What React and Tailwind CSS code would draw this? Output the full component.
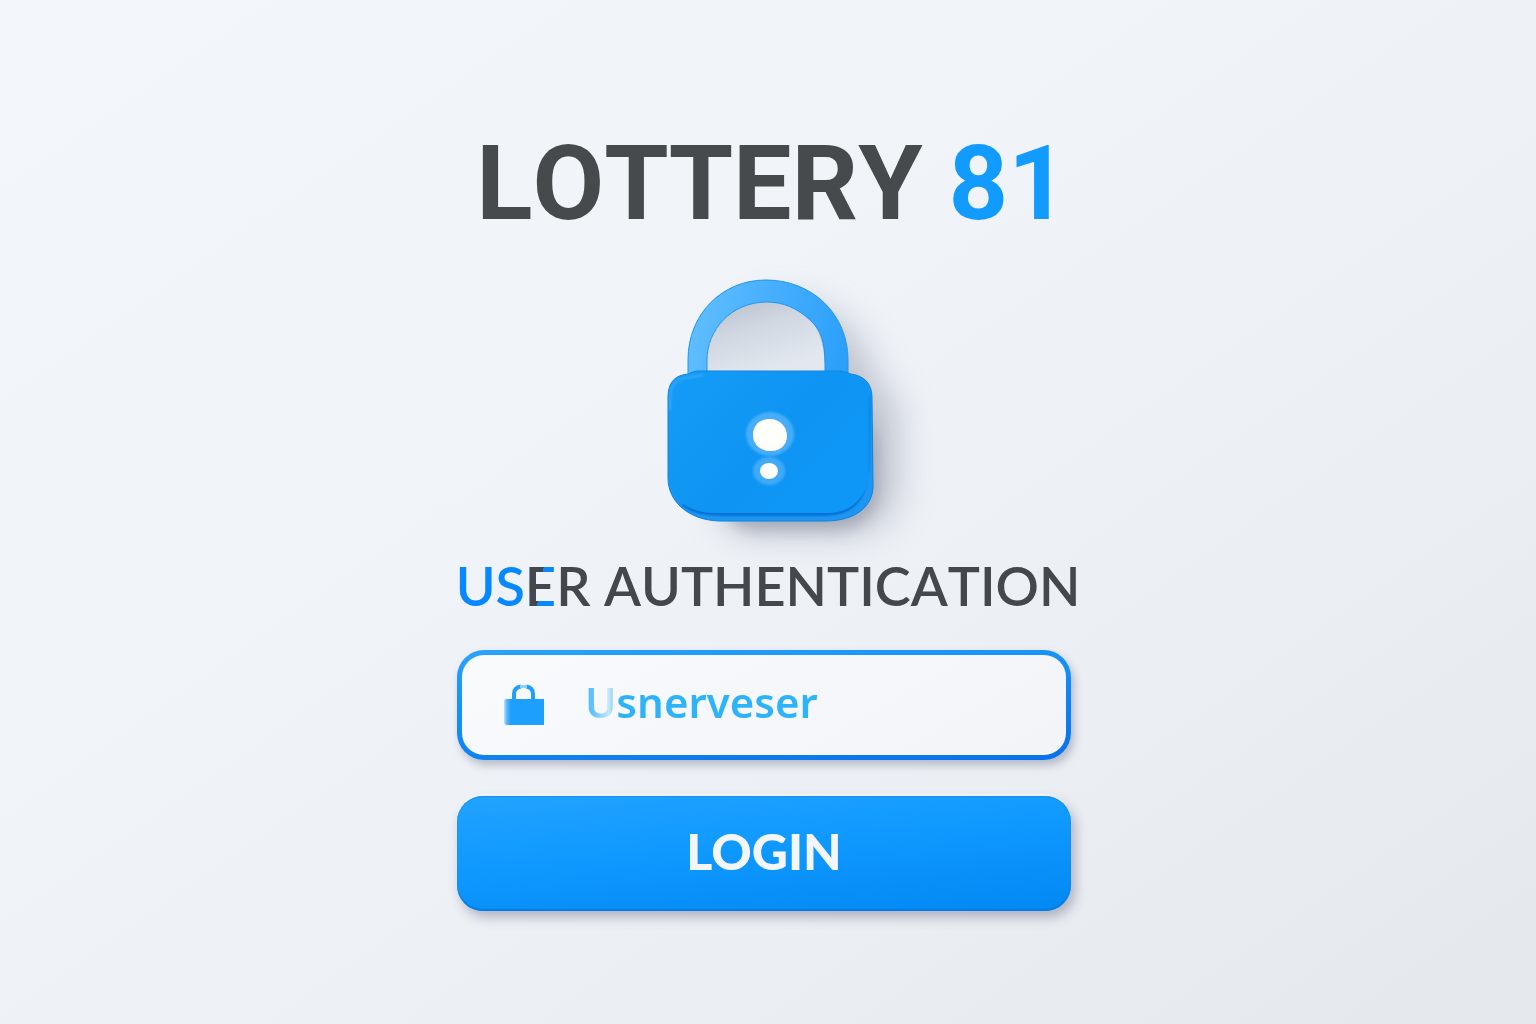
import React, { useState } from 'react';

const PadlockArt = () => (
  <svg
    className="block w-[206px] h-[242px] overflow-visible"
    viewBox="0 0 206 242"
    fill="none"
    role="img"
    aria-label="Padlock"
  >
    <defs>
      <linearGradient id="shackle" x1="20" y1="40" x2="182" y2="80" gradientUnits="userSpaceOnUse">
        <stop offset="0" stopColor="#62bfff" />
        <stop offset="0.5" stopColor="#44adfd" />
        <stop offset="1" stopColor="#2a9ff9" />
      </linearGradient>
      <linearGradient id="body" x1="20" y1="90" x2="180" y2="236" gradientUnits="userSpaceOnUse">
        <stop offset="0" stopColor="#149bf7" />
        <stop offset="0.5" stopColor="#0e95f3" />
        <stop offset="1" stopColor="#0f97f8" />
      </linearGradient>
      <linearGradient id="hole" x1="60" y1="22" x2="85" y2="98" gradientUnits="userSpaceOnUse">
        <stop offset="0" stopColor="#b9c2cf" />
        <stop offset="0.4" stopColor="#d0d7e1" />
        <stop offset="1" stopColor="#e3e8f0" />
      </linearGradient>
      <filter id="soft" x="-40%" y="-40%" width="180%" height="180%">
        <feGaussianBlur stdDeviation="18" />
      </filter>
      <filter id="near" x="-40%" y="-40%" width="180%" height="180%">
        <feGaussianBlur stdDeviation="8" />
      </filter>
      <filter id="edge" x="-10%" y="-10%" width="120%" height="120%">
        <feGaussianBlur stdDeviation="1" />
      </filter>
    </defs>

    {/* Cast shadows */}
    <path
      d="M60 100C60 50 88 24 122 24C166 24 204 60 206 100L230 122V206C230 236 206 252 176 252H84C64 252 56 240 56 222Z"
      fill="#8b93a5"
      opacity="0.5"
      filter="url(#soft)"
    />
    <rect x="50" y="130" width="160" height="120" rx="40" fill="#6d7486" opacity="0.4" filter="url(#near)" />

    {/* Shackle */}
    <path d="M39 92C39 48 62 21 100 21C137 21 158 44 158 92Z" fill="url(#hole)" />
    <path
      d="M21 98V80C21 34 55 0 99 0C145 0 181 34 181 80V98H158V84C158 62 154 50 143 40C130 28 116 22 100 22C64 22 40 50 40 80V98Z"
      fill="url(#shackle)"
      stroke="#2096ee"
      strokeWidth="1"
    />

    {/* Body */}
    <path
      d="M1 118C1 102 8 95 22 94C26 91 30 91 34 91H172C176 91 180 93 184 94C198 96 205 104 205 118L206 206C206 226 189 241 158 241H52C22 240 1 222 1 198Z"
      fill="#1b96f3"
      stroke="#0a84e4"
      strokeWidth="1"
    />
    <path d="M16 224C28 233 42 234 56 234H158C184 234 198 220 199 194" stroke="#0467ca" strokeWidth="3" filter="url(#edge)" />
    <path
      d="M2 118C2 102 9 96 22 95C26 92 30 92 34 92H172C176 92 180 94 184 95C197 97 204 104 204 118L202 196C199 218 184 233 160 233H50C20 233 2 219 2 192Z"
      fill="url(#body)"
    />
    <path d="M3 130V118C3 104 10 98 24 97L36 95" stroke="#4ab2fb" strokeWidth="2" opacity="0.7" filter="url(#edge)" />
    <path d="M203 116L202 192" stroke="#087edb" strokeWidth="2" opacity="0.6" filter="url(#edge)" />

    {/* Keyhole lights */}
    <ellipse cx="103" cy="154" rx="24" ry="22" fill="#46adf9" filter="url(#edge)" />
    <ellipse cx="102" cy="191" rx="16" ry="14" fill="#40a9f8" filter="url(#edge)" />
    <path d="M86 155C86 145 93 139 103 139C113 139 120 147 120 156C120 165 113 171 104 171C94 171 86 165 86 155Z" fill="#fffefb" />
    <ellipse cx="102" cy="191" rx="9" ry="8" fill="#fffefb" />
  </svg>
);

const FieldLockIcon = () => (
  <svg className="block w-[42px] h-[42px] shrink-0" viewBox="0 0 42 42" fill="none" aria-hidden="true">
    <defs>
      <linearGradient id="fieldLock" x1="0" y1="0" x2="8" y2="0" gradientUnits="userSpaceOnUse">
        <stop offset="0" stopColor="#1c9ffd" stopOpacity="0.1" />
        <stop offset="0.5" stopColor="#1c9ffd" stopOpacity="0.75" />
        <stop offset="1" stopColor="#1c9ffd" />
      </linearGradient>
    </defs>
    <path d="M11 18V10C11 5 14 3 18 2.500" stroke="#1c9ffd" strokeWidth="4" />
    <path d="M23 2.500C27 3 30 5 30 10V18" stroke="#1c9ffd" strokeWidth="4" />
    <path d="M17 2.500H24" stroke="#8fd0fe" strokeWidth="3" />
    <path d="M1 17Q1 15 3 15H41V41H3Q1 41 1 38Z" fill="url(#fieldLock)" />
  </svg>
);

const App = () => {
  const [username, setUsername] = useState('Usnerveser');

  return (
    <main className="min-h-screen flex flex-col items-center pt-[132px] pb-28 bg-[linear-gradient(145deg,#f3f6fa_0%,#f0f3f8_40%,#ebeef3_70%,#e4e7ec_100%)]">
      <h1 className="pl-2 font-[Roboto,sans-serif] font-bold text-[104px] leading-[104px] [font-kerning:none] text-[#464a4d] text-center">
        LOTTERY <span className="text-[#129bff]">81</span>
      </h1>

      <div className="mt-11 pl-1">
        <PadlockArt />
      </div>

      <h2 className="mt-8 font-[Lato,sans-serif] font-semibold text-[54px] leading-[64px] [font-kerning:none] text-[#44484c] text-center">
        <span className="text-[#0788ff]">US</span>
        {/* Dark stem and middle arm, blue outer arms */}
        <span className="bg-[linear-gradient(100deg,#44484c_50%,transparent_50%),linear-gradient(180deg,#0788ff_42%,#44484c_42%_62%,#0788ff_62%)] bg-clip-text text-transparent">E</span>
        R AUTHENTICATION
      </h2>

      <form
        className="mt-8 w-full max-w-[622px] pr-2 flex flex-col gap-9"
        onSubmit={(e) => e.preventDefault()}
      >
        {/* Outer layer paints the gradient border */}
        <div className="rounded-[27px] p-[5px] bg-[linear-gradient(175deg,#2ba3fb_0%,#1590f5_40%,#0870ec_100%)] shadow-[3px_5px_9px_rgba(100,105,130,0.4)]">
          <label className="flex items-center gap-10 rounded-[22px] h-[100px] pl-[41px] pr-8 bg-[linear-gradient(150deg,#f8fafc_0%,#f2f4f8_100%)]">
            <FieldLockIcon />
            <span className="absolute size-px overflow-hidden opacity-0">Username</span>
            <input
              type="text"
              value={username}
              onChange={(e) => setUsername(e.target.value)}
              className="min-w-0 grow h-20 pb-2 font-['Noto_Sans',sans-serif] font-semibold text-[42px] leading-[64px] bg-[linear-gradient(90deg,#4dbcf8_0px,#62c4f9_8px,#c8e8fb_24px,#2fb3f8_34px,#2fb3f8_100%)] bg-clip-text text-transparent caret-sky-500 focus:outline-none"
            />
          </label>
        </div>

        <button
          type="submit"
          className="h-[115px] pb-1 rounded-[26px] bg-[linear-gradient(175deg,#22a3ff_0%,#0f99ff_45%,#0288f3_100%)] font-[Lato,sans-serif] font-black text-[50px] text-[#f3f5f7] shadow-[4px_6px_12px_rgba(100,105,130,0.45),0_-2px_2px_rgba(255,255,255,0.7),inset_0_-2px_1px_#067be4,inset_0_1px_1px_#1590f0] cursor-pointer"
        >
          LOGIN
        </button>
      </form>
    </main>
  );
};

export default App;
